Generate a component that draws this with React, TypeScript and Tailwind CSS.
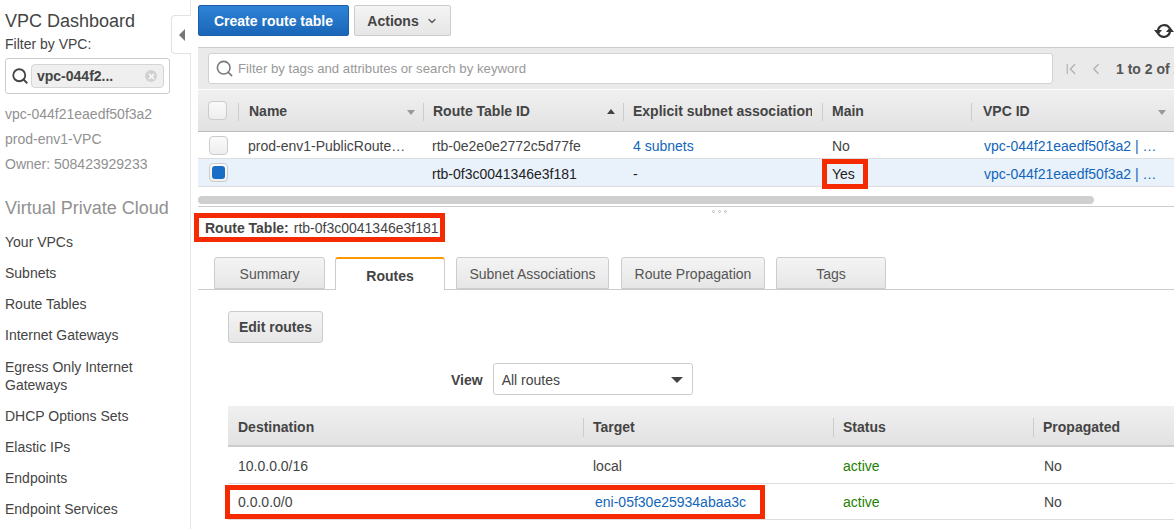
import React from "react";
import { ChevronDown, ChevronFirst, ChevronLeft, Search, X } from "lucide-react";

const navItems = ["Your VPCs", "Subnets", "Route Tables", "Internet Gateways", "Egress Only Internet Gateways", "DHCP Options Sets", "Elastic IPs", "Endpoints", "Endpoint Services"];

function Sort({ up = false }: { up?: boolean }) {
  return (
    <span
      className={
        up
          ? "absolute right-[8px] top-[19px] border-x-[4px] border-b-[5px] border-x-transparent border-b-[#444]"
          : "absolute right-[8px] top-[20px] border-x-[4px] border-t-[5px] border-x-transparent border-t-[#999]"
      }
    />
  );
}

function HeaderCell({ label, pad = "pl-[10px]", children }: { label: string; pad?: string; children?: React.ReactNode }) {
  return (
    <div className={`relative flex items-center whitespace-nowrap pr-[10px] font-bold text-[#444] ${pad}`}>
      <span className="absolute left-0 top-[13px] h-[18px] w-px bg-[#ccc]" />
      <span className="min-w-0 overflow-hidden">{label}</span>
      {children}
    </div>
  );
}

function Checkbox({ checked = false }: { checked?: boolean }) {
  return (
    <span className="flex h-[19px] w-[19px] items-center justify-center rounded-[4px] border border-[#ccc] bg-gradient-to-b from-[#fafafa] to-[#eee]">
      {checked && <span className="h-[13px] w-[13px] rounded-[3px] bg-[#1a6dc4]" />}
    </span>
  );
}

function Tab({ label, width, active = false }: { label: string; width: string; active?: boolean }) {
  return (
    <div
      className={
        active
          ? `${width} -mb-px flex h-[33px] items-center justify-center rounded-t-[3px] border-x border-t-2 border-x-[#ccc] border-t-[#f90] bg-white pt-[2px] font-bold text-[#444]`
          : `${width} flex h-[32px] items-center justify-center rounded-t-[3px] border border-[#ccc] bg-gradient-to-b from-[#f4f4f4] to-[#e6e6e6] pt-[1px] text-[#555]`
      }
    >
      {label}
    </div>
  );
}

function RouteHead({ label }: { label: string }) {
  return (
    <div className="relative flex items-center pl-[10px]">
      <span className="absolute left-0 top-[10px] h-[19px] w-px bg-[#ccc]" />
      {label}
    </div>
  );
}

function SyncIcon() {
  return (
    <svg width="20" height="16" viewBox="0 0 20 16" className="absolute left-[956px] top-[23px] text-[#333]">
      <path d="M15.5 5 A6.3 6.3 0 0 0 4 7.5" fill="none" stroke="currentColor" strokeWidth="2.2" />
      <path d="M4.5 11 A6.3 6.3 0 0 0 16 8.5" fill="none" stroke="currentColor" strokeWidth="2.2" />
      <path d="M0 7 H8 L4 12 Z" fill="currentColor" />
      <path d="M12 9 H20 L16 4 Z" fill="currentColor" />
    </svg>
  );
}

export default function App() {
  return (
    <div className="flex h-[529px] w-[1174px] overflow-hidden bg-white font-['Liberation_Sans',Arial,sans-serif] text-[14px] leading-[18px] text-[#444]">
      {/* Side nav */}
      <aside className="relative w-[191px] shrink-0 border-r border-[#e6e6e6] pl-[5px] pt-[11px]">
        <h1 className="text-[18px] leading-[20px] text-[#444]">VPC Dashboard</h1>
        <div className="mt-[4px] text-[#444]">Filter by VPC:</div>
        <div className="mt-[5px] flex h-[36px] w-[165px] items-center gap-[2px] rounded-[3px] border border-[#ccc] pl-[5px]">
          <Search size={18} strokeWidth={2.4} className="shrink-0 text-[#444]" />
          <div className="flex h-[24px] w-[133px] items-center justify-between rounded-[4px] border border-[#d5d5d5] bg-[#efefef] pl-[5px] pr-[6px] font-bold text-[#444]">
            vpc-044f2...
            <span className="flex h-[12px] w-[12px] items-center justify-center rounded-full bg-[#d2d2d2]">
              <X size={9} strokeWidth={3} className="text-white" />
            </span>
          </div>
        </div>
        <div className="mt-[11px] flex flex-col gap-[7px] text-[#919191]">
          <div>vpc-044f21eaedf50f3a2</div>
          <div>prod-env1-VPC</div>
          <div>Owner: 508423929233</div>
        </div>
        <h2 className="mt-[25px] text-[18px] leading-[20px] text-[#919191]">Virtual Private Cloud</h2>
        <nav className="mt-[15px] flex w-[150px] flex-col gap-[13.15px] text-[#444]">
          {navItems.map((item) => (
            <div key={item}>{item}</div>
          ))}
        </nav>
        {/* Collapse tab */}
        <div className="absolute right-[-1px] top-[15px] flex h-[39px] w-[20px] items-center justify-center rounded-l-[4px] border border-r-0 border-[#e2e2e2] bg-white">
          <span className="border-y-[6px] border-r-[6px] border-y-transparent border-r-[#777]" />
        </div>
      </aside>

      {/* Main */}
      <main className="flex min-w-0 flex-1 flex-col pl-[7px]">
        <div className="relative flex h-[47px] shrink-0 items-start gap-[5px] pt-[5px]">
          <button className="h-[31px] w-[151px] rounded-[2px] border border-[#1b5fa8] bg-gradient-to-b from-[#2e83d6] to-[#1a66b8] font-bold text-white">
            Create route table
          </button>
          <button className="flex h-[31px] w-[97px] items-center justify-center gap-[7px] rounded-[2px] border border-[#ccc] bg-gradient-to-b from-[#f4f4f4] to-[#e6e6e6] font-bold text-[#444]">
            Actions
            <ChevronDown size={12} strokeWidth={2.5} className="text-[#555]" />
          </button>
          <SyncIcon />
        </div>

        {/* Filter strip */}
        <div className="flex h-[42px] shrink-0 items-center border-t border-[#ccc] bg-[#eaeaea] pl-[10px]">
          <div className="flex h-[31px] w-[845px] shrink-0 items-center gap-[4px] rounded-[3px] border border-[#d2d2d2] bg-white pl-[6px] text-[13.2px] text-[#999]">
            <Search size={19} strokeWidth={2} className="text-[#777]" />
            Filter by tags and attributes or search by keyword
          </div>
          <ChevronFirst size={18} strokeWidth={1.6} className="ml-[9px] shrink-0 text-[#b0b0b0]" />
          <ChevronLeft size={18} strokeWidth={1.6} className="ml-[7px] shrink-0 text-[#b0b0b0]" />
          <span className="ml-[11px] whitespace-nowrap font-bold text-[#555]">1 to 2 of 2</span>
        </div>

        {/* Route tables grid */}
        <div className="grid h-[43px] shrink-0 grid-cols-[40px_185px_200px_199px_149px_203px] border-y border-y-[#bbb] border-t-white bg-gradient-to-b from-[#f0f0f0] to-[#e2e2e2]">
          <div className="flex items-center pl-[10px]">
            <Checkbox />
          </div>
          <HeaderCell label="Name" pad="pl-[11px]">
            <Sort />
          </HeaderCell>
          <HeaderCell label="Route Table ID">
            <Sort up />
          </HeaderCell>
          <HeaderCell label="Explicit subnet association" />
          <HeaderCell label="Main" />
          <HeaderCell label="VPC ID" pad="pl-[12px]">
            <Sort />
          </HeaderCell>
        </div>
        <div className="grid h-[27px] shrink-0 grid-cols-[40px_185px_200px_199px_149px_203px] items-center border-b border-[#ddd] pt-[2px]">
          <div className="-mt-[2px] pl-[11px]">
            <Checkbox />
          </div>
          <div className="whitespace-nowrap pl-[10px] text-[#444]">prod-env1-PublicRoute…</div>
          <div className="pl-[9px]">rtb-0e2e0e2772c5d77fe</div>
          <div className="pl-[10px] text-[#1166bb]">4 subnets</div>
          <div className="pl-[10px]">No</div>
          <div className="whitespace-nowrap pl-[13px] text-[#1166bb]">
            vpc-044f21eaedf50f3a2 | …
          </div>
        </div>
        <div className="grid h-[28px] shrink-0 grid-cols-[40px_185px_200px_199px_149px_203px] items-center border-b border-[#ddd] bg-[#e9f1fb] pt-[2px] text-[#222]">
          <div className="-mt-[2px] pl-[11px]">
            <Checkbox checked />
          </div>
          <div />
          <div className="pl-[9px]">rtb-0f3c0041346e3f181</div>
          <div className="pl-[10px]">-</div>
          <div className="relative pl-[10px]">
            Yes
            <span className="absolute left-0 top-[-6px] h-[30px] w-[46px] border-[5px] border-[#f52a00]" />
          </div>
          <div className="whitespace-nowrap pl-[13px] text-[#1166bb]">
            vpc-044f21eaedf50f3a2 | …
          </div>
        </div>

        {/* Horizontal scroll */}
        <div className="h-[20px] shrink-0 border-b border-[#ccc] pt-[9px]">
          <div className="h-[8px] w-[896px] rounded-full bg-[#cfcfcf]" />
        </div>

        {/* Details */}
        <div className="relative flex flex-1 flex-col">
          <div className="absolute left-[514px] top-[3px] flex gap-[3px]">
            <span className="h-[3px] w-[3px] rounded-full border border-[#bbb]" />
            <span className="h-[3px] w-[3px] rounded-full border border-[#bbb]" />
            <span className="h-[3px] w-[3px] rounded-full border border-[#bbb]" />
          </div>
          <div className="ml-[-4px] mt-[6px] flex h-[29px] w-[251px] items-center whitespace-nowrap border-[5px] border-[#f52a00] pl-[6px] text-[14px]">
            <span className="font-bold">Route Table:</span>
            <span className="ml-[5px]">rtb-0f3c0041346e3f181</span>
          </div>

          <div className="mt-[15px] flex h-[33px] shrink-0 items-end gap-[11px] border-b border-[#ccc] pl-[16px]">
            <Tab label="Summary" width="w-[111px]" />
            <Tab label="Routes" width="-ml-px w-[110px]" active />
            <Tab label="Subnet Associations" width="w-[153px]" />
            <Tab label="Route Propagation" width="ml-px w-[144px]" />
            <Tab label="Tags" width="w-[110px]" />
          </div>

          <button className="ml-[30px] mt-[21px] h-[32px] w-[95px] shrink-0 rounded-[3px] border border-[#ccc] bg-gradient-to-b from-[#f4f4f4] to-[#e6e6e6] font-bold text-[#444]">
            Edit routes
          </button>

          <div className="ml-[253px] mt-[20px] flex shrink-0 items-center gap-[10px]">
            <span className="pt-[1px] font-bold">View</span>
            <div className="flex h-[32px] w-[200px] items-center justify-between rounded-[3px] border border-[#ccc] pl-[8px] pr-[9px] pt-[1px]">
              All routes
              <span className="border-x-[6px] border-t-[6px] border-x-transparent border-t-[#444]" />
            </div>
          </div>

          <div className="ml-[30px] mt-[11px] grid h-[41px] shrink-0 grid-cols-[355px_250px_200px_141px] border-b-2 border-[#ccc] bg-gradient-to-b from-[#f0f0f0] to-[#e2e2e2] pt-[2px] font-bold">
            <div className="flex items-center pl-[10px]">Destination</div>
            <RouteHead label="Target" />
            <RouteHead label="Status" />
            <RouteHead label="Propagated" />
          </div>
          <div className="ml-[30px] grid h-[37px] shrink-0 grid-cols-[355px_250px_200px_141px] items-center border-b border-[#ddd] pt-[2px]">
            <div className="pl-[10px]">10.0.0.0/16</div>
            <div className="pl-[10px]">local</div>
            <div className="pl-[10px] text-[#1d8102]">active</div>
            <div className="pl-[11px]">No</div>
          </div>
          <div className="relative ml-[30px] grid h-[36px] shrink-0 grid-cols-[355px_250px_200px_141px] items-center border-b border-[#ddd]">
            <div className="pl-[10px]">0.0.0.0/0</div>
            <div className="pl-[12px] text-[#1166bb]">eni-05f30e25934abaa3c</div>
            <div className="pl-[10px] text-[#1d8102]">active</div>
            <div className="pl-[11px]">No</div>
            <span className="absolute left-[-3px] top-[1px] h-[34px] w-[540px] border-[5px] border-[#f52a00]" />
          </div>
        </div>
      </main>
    </div>
  );
}
